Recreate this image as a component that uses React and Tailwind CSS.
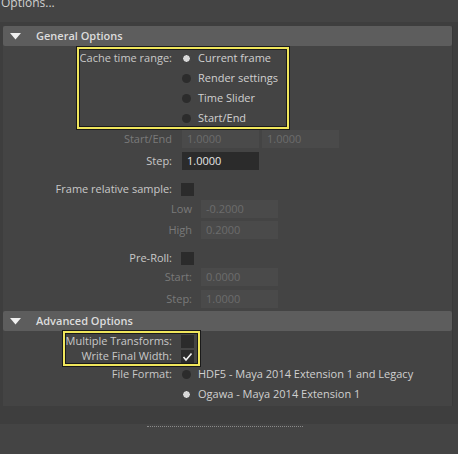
import React from "react";

const font = { fontFamily: '"Open Sans", "Noto Sans", sans-serif' };

function Header({ title }) {
  return (
    <div className="flex h-[20px] items-center rounded-[2px] bg-[#5d5d5d]">
      <svg width="11" height="7" viewBox="0 0 11 7" className="ml-[7px]">
        <polygon points="0,0 11,0 5.5,6.5" fill="#f0f0f0" />
      </svg>
      <span className="ml-[15px] text-[11px] font-semibold text-[#dcdcdc]">{title}</span>
    </div>
  );
}

function Radio({ on }) {
  return on ? (
    <span className="block h-[9px] w-[9px] rounded-full border border-[#2a2a2a] bg-[#d8d8d8]" />
  ) : (
    <span className="block h-[9px] w-[9px] rounded-full bg-[#2c2c2c]" />
  );
}

function Check({ on }) {
  return (
    <span className="flex h-[13px] w-[13px] items-center justify-center bg-[#2b2b2b]">
      {on && (
        <svg width="11" height="10" viewBox="0 0 11 10">
          <polyline points="1.5,5 4,8 9.5,1.5" fill="none" stroke="#f2f2f2" strokeWidth="1.6" />
        </svg>
      )}
    </span>
  );
}

function Field({ value, active }) {
  return (
    <span
      className={
        "flex h-[18px] w-[77px] items-center pl-[5px] text-[11px] " +
        (active ? "bg-[#2b2b2b] text-[#e6e6e6]" : "bg-[#4a4a4a] text-[#6c6c6c]")
      }
    >
      {value}
    </span>
  );
}

function Label({ children, dim, w = "w-[169px]" }) {
  return (
    <span className={w + " shrink-0 text-right " + (dim ? "text-[#7a7a7a]" : "text-[#c8c8c8]")}>
      {children}
    </span>
  );
}

function RadioRow({ label, text, on, h = "h-[20px]" }) {
  return (
    <div className={"flex items-center " + h}>
      <Label>{label}</Label>
      <span className="ml-[10px]">
        <Radio on={on} />
      </span>
      <span className="ml-[7px] text-[#d0d0d0]">{text}</span>
    </div>
  );
}

export default function App() {
  return (
    <div className="h-[454px] w-[458px] overflow-hidden bg-[#444444] text-[11px]" style={font}>
      <div className="h-[22px] overflow-hidden pl-[1px] text-[12px] leading-[12px] text-[#d0d0d0]">
        <div className="relative top-[-3px]">Options...</div>
      </div>
      <div className="relative h-[402px] bg-[#3e3e3e] pl-[3px] pr-[5px] pt-[4px]">
        <div className="border-r border-[#393939] bg-[#444444]">
          <Header title="General Options" />
          <div className="relative pb-[2px] pt-[2px]">
            <div className="pointer-events-none absolute left-[74px] top-[1px] h-[82px] w-[212px] border-2 border-[#f0e65c] shadow-[0_0_0_1px_#1a1a1a,inset_0_0_0_1px_#1a1a1a]" />
            <RadioRow label="Cache time range:" text="Current frame" on />
            <RadioRow label="" text="Render settings" />
            <RadioRow label="" text="Time Slider" />
            <RadioRow label="" text="Start/End" />
            <div className="mt-[1px] flex h-[20px] items-center">
              <Label dim>Start/End</Label>
              <span className="ml-[10px]">
                <Field value="1.0000" />
              </span>
              <span className="ml-[3px]">
                <Field value="1.0000" />
              </span>
            </div>
            <div className="mt-[2px] flex h-[20px] items-center">
              <Label>Step:</Label>
              <span className="ml-[10px]">
                <Field value="1.0000" active />
              </span>
            </div>
            <div className="mt-[8px] flex h-[20px] items-center">
              <Label>Frame relative sample:</Label>
              <span className="ml-[9px]">
                <Check />
              </span>
            </div>
            <div className="flex h-[20px] items-center">
              <Label dim w="w-[189px]">Low</Label>
              <span className="ml-[9px]">
                <Field value="-0.2000" />
              </span>
            </div>
            <div className="mt-[1px] flex h-[20px] items-center">
              <Label dim w="w-[189px]">High</Label>
              <span className="ml-[9px]">
                <Field value="0.2000" />
              </span>
            </div>
            <div className="mt-[8px] flex h-[20px] items-center">
              <Label>Pre-Roll:</Label>
              <span className="ml-[9px]">
                <Check />
              </span>
            </div>
            <div className="flex h-[18px] items-center">
              <Label dim w="w-[189px]">Start:</Label>
              <span className="ml-[9px]">
                <Field value="0.0000" />
              </span>
            </div>
            <div className="mt-[3px] flex h-[20px] items-center">
              <Label dim w="w-[189px]">Step:</Label>
              <span className="ml-[9px]">
                <Field value="1.0000" />
              </span>
            </div>
          </div>
          <Header title="Advanced Options" />
          <div className="relative pb-[2px]">
            <div className="pointer-events-none absolute left-[60px] top-[0px] h-[35px] w-[137px] border-2 border-[#f0e65c] shadow-[0_0_0_1px_#1a1a1a,inset_0_0_0_1px_#1a1a1a]" />
            <div className="flex h-[18px] items-center pt-[2px]">
              <Label>Multiple Transforms:</Label>
              <span className="ml-[9px]">
                <Check />
              </span>
            </div>
            <div className="flex h-[15px] items-center">
              <Label>Write Final Width:</Label>
              <span className="ml-[9px]">
                <Check on />
              </span>
            </div>
            <RadioRow label="File Format:" text="HDF5 - Maya 2014 Extension 1 and Legacy" />
            <RadioRow label="" text="Ogawa - Maya 2014 Extension 1" on />
          </div>
        </div>
      </div>
      <div className="flex justify-center pt-[2px]">
        <div className="ml-[-8px] w-[156px] border-t border-dotted border-[#8a8a8a]" />
      </div>
    </div>
  );
}
